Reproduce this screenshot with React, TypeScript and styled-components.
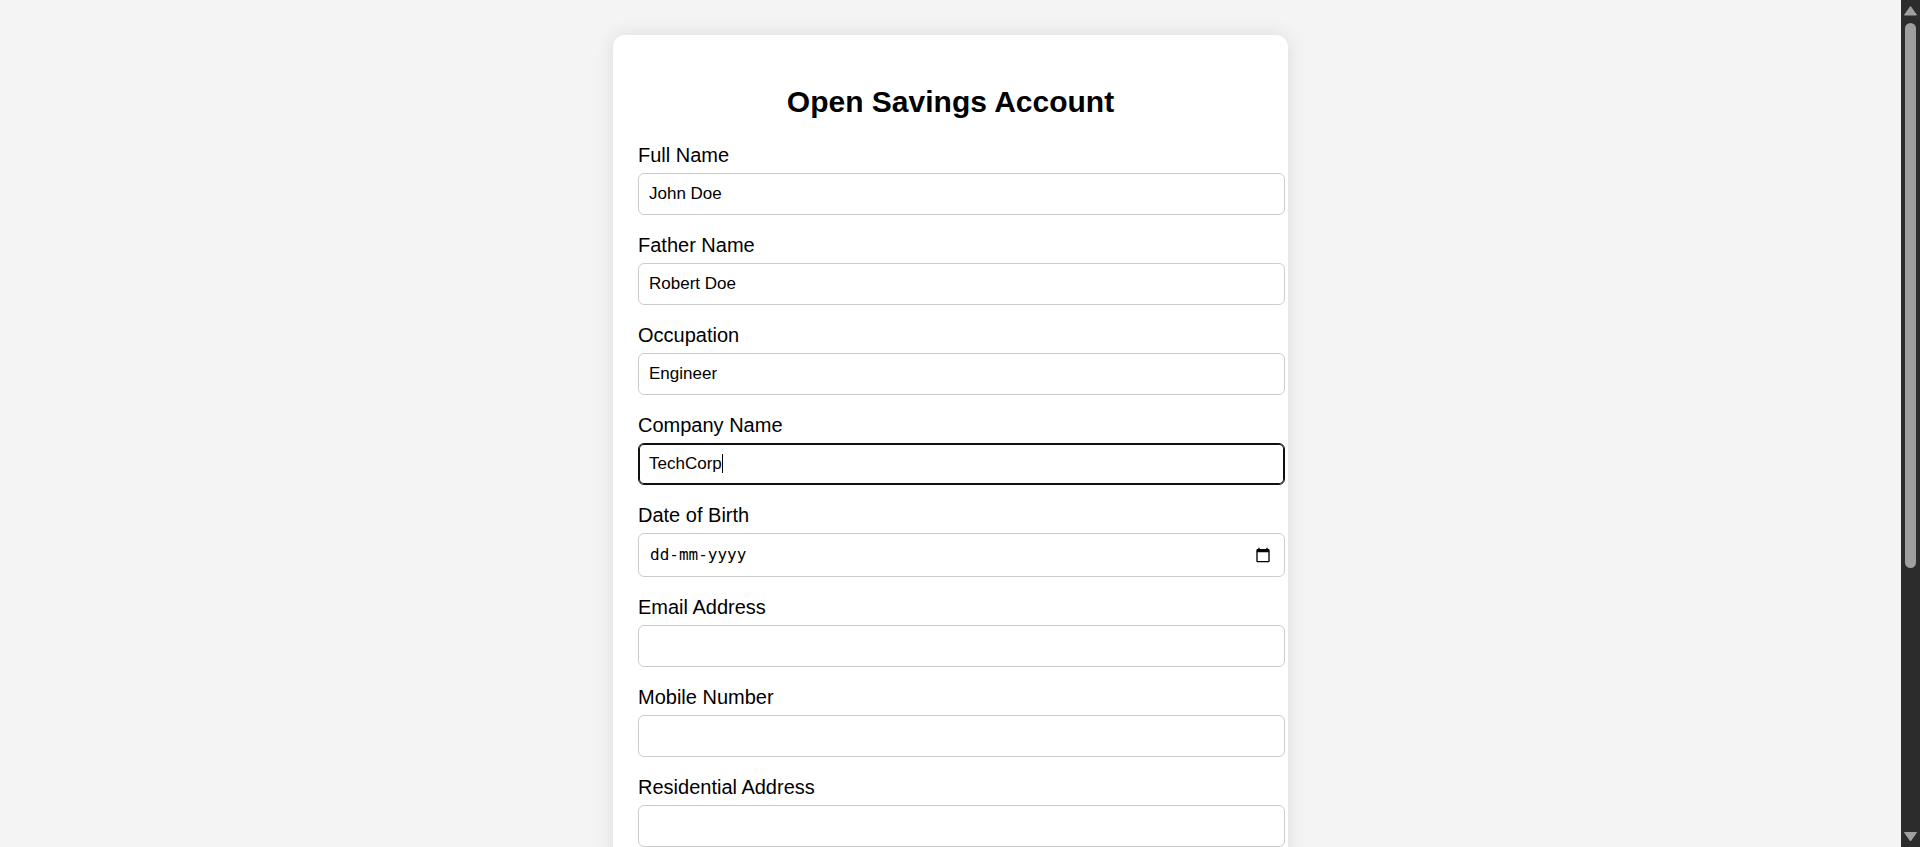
import React, { useState } from 'react';
import styled, { createGlobalStyle, css } from 'styled-components';

const GlobalStyle = createGlobalStyle`
  body {
    margin: 0;
    background: #f4f4f4;
    color: #000;
    font-family: Arial, 'Liberation Sans', sans-serif;
    font-size: 20px;
    line-height: 23px;
  }
`;

const Window = styled.div`
  display: flex;
  height: 100vh;
`;

const Page = styled.main`
  flex: 1;
  min-width: 0;
  overflow-y: auto;
  scrollbar-width: none;
`;

const Card = styled.form`
  box-sizing: border-box;
  max-width: 675px;
  margin: 35px auto;
  padding: 25px;
  background: #fff;
  border-radius: 12px;
  box-shadow: 0 0 19px rgba(0, 0, 0, 0.1);
`;

const Title = styled.h2`
  margin: 25px 0;
  font-size: 30px;
  line-height: 34px;
  font-weight: bold;
  text-align: center;
`;

const Field = styled.div`
  margin-bottom: 19px;
`;

const Label = styled.label`
  display: block;
  margin-bottom: 6px;
`;

const boxed = css`
  width: 100%;
  padding: 10px;
  border: 1px solid #ccc;
  border-radius: 6px;
  background: #fff;
`;

const Control = styled.div`
  position: relative;
`;

const TextInput = styled.input<{ $active?: boolean }>`
  ${boxed}
  display: block;
  height: 20px;
  color: #000;
  font: 17px/20px Arial, 'Liberation Sans', sans-serif;
  outline: none;
  ${({ $active }) =>
    $active &&
    css`
      border-color: #101010;
      box-shadow: inset 0 0 0 1px #101010;
      caret-color: transparent;
    `}
`;

const Caret = styled.span`
  position: absolute;
  top: 11px;
  left: 84px;
  width: 1px;
  height: 19px;
  background: #000;
`;

const DateBox = styled.div`
  ${boxed}
  display: flex;
  align-items: center;
  height: 22px;
`;

const DateInput = styled.input`
  flex: 1;
  min-width: 0;
  padding: 0 1px;
  border: 0;
  background: none;
  color: #000;
  font: 16px/22px 'DejaVu Sans Mono', monospace;
  outline: none;

  &::placeholder {
    color: #000;
    opacity: 1;
  }
`;

const PickerButton = styled.button`
  display: flex;
  margin: 0 3px 0 0;
  padding: 0;
  border: 0;
  background: none;
`;

const ScrollTrack = styled.div`
  display: flex;
  flex-direction: column;
  align-items: center;
  width: 19px;
  background: #2c2c2c;
`;

const ScrollArrow = styled.svg`
  flex: none;
  width: 19px;
  height: 23px;
  fill: #9f9f9f;
`;

const ScrollRun = styled.div`
  flex: 1;
  width: 11px;
`;

const ScrollThumb = styled.div`
  height: 68%;
  border-radius: 6px;
  background: #9f9f9f;
`;

type FieldSpec = { id: string; label: string; kind?: 'date' | 'email' | 'tel'; value?: string; active?: boolean };

const fields: FieldSpec[] = [
  { id: 'fullName', label: 'Full Name', value: 'John Doe' },
  { id: 'fatherName', label: 'Father Name', value: 'Robert Doe' },
  { id: 'occupation', label: 'Occupation', value: 'Engineer' },
  { id: 'company', label: 'Company Name', value: 'TechCorp', active: true },
  { id: 'dob', label: 'Date of Birth', kind: 'date' },
  { id: 'email', label: 'Email Address', kind: 'email' },
  { id: 'mobile', label: 'Mobile Number', kind: 'tel' },
  { id: 'address', label: 'Residential Address' },
];

function FormField({ id, label, kind, value = '', active }: FieldSpec) {
  const [text, setText] = useState(value);
  const shared = {
    id,
    name: id,
    value: text,
    onChange: (e: React.ChangeEvent<HTMLInputElement>) => setText(e.target.value),
  };
  return (
    <Field>
      <Label htmlFor={id}>{label}</Label>
      {kind === 'date' ? (
        <DateBox>
          <DateInput {...shared} placeholder="dd-mm-yyyy" />
          <PickerButton type="button" aria-label="Show date picker">
            <svg width="16" height="16" viewBox="0 0 24 24" aria-hidden="true">
              <path d="M20 3h-1V1h-2v2H7V1H5v2H4c-1.1 0-2 .9-2 2v16c0 1.1.9 2 2 2h16c1.1 0 2-.9 2-2V5c0-1.1-.9-2-2-2zm0 18H4V8h16v13z" />
            </svg>
          </PickerButton>
        </DateBox>
      ) : (
        <Control>
          <TextInput {...shared} type={kind ?? 'text'} $active={active} />
          {active && <Caret />}
        </Control>
      )}
    </Field>
  );
}

export default function App() {
  return (
    <Window>
      <GlobalStyle />
      <Page>
        <Card>
          <Title>Open Savings Account</Title>
          {fields.map((field) => (
            <FormField key={field.id} {...field} />
          ))}
        </Card>
      </Page>
      <ScrollTrack aria-hidden="true">
        <ScrollArrow viewBox="0 0 19 23">
          <path d="M9.5 6.5L15.5 15H3.5z" stroke="#9f9f9f" strokeLinejoin="round" />
        </ScrollArrow>
        <ScrollRun>
          <ScrollThumb />
        </ScrollRun>
        <ScrollArrow viewBox="0 0 19 23">
          <path d="M9.5 17L15.5 8.5H3.5z" stroke="#9f9f9f" strokeLinejoin="round" />
        </ScrollArrow>
      </ScrollTrack>
    </Window>
  );
}
